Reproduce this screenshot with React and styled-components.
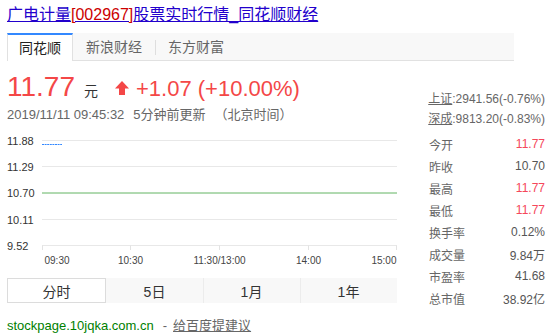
import React from 'react'
import styled, { createGlobalStyle } from 'styled-components'

const GlobalStyle = createGlobalStyle`
    body {
        margin: 0;
        background: #fff;
        font-family: "Liberation Sans", Arial, "Noto Sans CJK SC", sans-serif;
        color: #333;
    }
`

const sources = ['同花顺', '新浪财经', '东方财富']
const ranges = ['分时', '5日', '1月', '1年']

const stats = [
    { label: '今开', value: '11.77', up: true },
    { label: '昨收', value: '10.70' },
    { label: '最高', value: '11.77', up: true },
    { label: '最低', value: '11.77', up: true },
    { label: '换手率', value: '0.12%' },
    { label: '成交量', value: '9.84万' },
    { label: '市盈率', value: '41.68' },
    { label: '总市值', value: '38.92亿' },
]

// grid rows of the intraday chart (svg coords)
const priceLines = [
    { label: '11.88', y: 10.5 },
    { label: '11.29', y: 36.5 },
    { label: '10.70', y: 63 },
    { label: '10.11', y: 89.5 },
    { label: '9.52', y: 115.5 },
]

const timeTicks = [
    { label: '09:30', x: 35.5, anchor: 'start', dx: 2 },
    { label: '10:30', x: 123.5, anchor: 'middle', dx: 0 },
    { label: '11:30/13:00', x: 212.5, anchor: 'middle', dx: 0 },
    { label: '14:00', x: 301.5, anchor: 'middle', dx: 0 },
    { label: '15:00', x: 389.5, anchor: 'end', dx: 0 },
]

const UpArrow = () => (
    <svg width="16" height="16" viewBox="0 0 16 16">
        <polygon points="1,8.5 8,1 15,8.5" fill="#f44747" />
        <rect x="5" y="8" width="6" height="7" fill="#f44747" />
    </svg>
)

const IntradayChart = () => (
    <ChartSvg width="390" height="140" viewBox="0 0 390 140">
        {priceLines.map((p, i) => (
            <g key={p.label}>
                <line
                    x1="35"
                    x2="390"
                    y1={p.y}
                    y2={p.y}
                    stroke={i === 2 ? '#63b463' : '#e8e8e8'}
                    strokeWidth="1"
                />
                <text x="0" y={p.y + 4} fontSize="11" fill="#333">
                    {p.label}
                </text>
            </g>
        ))}
        <line x1="35" x2="55" y1="14.5" y2="14.5" stroke="#3388ff" strokeWidth="1" strokeDasharray="2 0.6" />
        {timeTicks.map((t) => (
            <g key={t.label}>
                <line x1={t.x} x2={t.x} y1="115.5" y2="120" stroke="#e3e3e3" />
                <text x={t.x + t.dx} y="134" fontSize="10" fill="#444" textAnchor={t.anchor}>
                    {t.label}
                </text>
            </g>
        ))}
    </ChartSvg>
)

const App = () => {
    return (
        <>
            <GlobalStyle />
            <Page>
                <Title href="#">
                    广电计量<Code>[002967]</Code>股票实时行情_同花顺财经
                </Title>

                <SourceTabs>
                    {sources.map((s, i) => (
                        <SourceTab key={s} active={i === 0} divided={i > 1}>
                            {s}
                        </SourceTab>
                    ))}
                </SourceTabs>

                <Main>
                    <LeftCol>
                        <PriceRow>
                            <Price>11.77</Price>
                            <Unit>元</Unit>
                            <ArrowBox>
                                <UpArrow />
                            </ArrowBox>
                            <Change>+1.07 (+10.00%)</Change>
                        </PriceRow>
                        <TimeRow>
                            2019/11/11 09:45:32<Gap />5分钟前更新<Gap />（北京时间）
                        </TimeRow>
                        <IntradayChart />
                        <RangeTabs>
                            {ranges.map((r, i) => (
                                <RangeTab key={r} active={i === 0} divided={i > 1}>
                                    {r}
                                </RangeTab>
                            ))}
                        </RangeTabs>
                    </LeftCol>

                    <RightCol>
                        <IndexLine>
                            <IndexLink href="#">上证</IndexLink>:2941.56(-0.76%)
                        </IndexLine>
                        <IndexLine>
                            <IndexLink href="#">深成</IndexLink>:9813.20(-0.83%)
                        </IndexLine>
                        <StatList>
                            {stats.map((s) => (
                                <StatRow key={s.label}>
                                    <StatLabel>{s.label}</StatLabel>
                                    <StatValue up={s.up}>{s.value}</StatValue>
                                </StatRow>
                            ))}
                        </StatList>
                    </RightCol>
                </Main>

                <Footer>
                    <SiteUrl>stockpage.10jqka.com.cn</SiteUrl>
                    <Dash>-</Dash>
                    <Feedback href="#">给百度提建议</Feedback>
                </Footer>
            </Page>
        </>
    )
}

// PAGE
const Page = styled.div`
    width: 540px;
    padding: 4px 7px 0;
`

const Title = styled.a`
    display: inline-block;
    font-size: 16px;
    line-height: 22px;
    color: #2200cc;
    text-decoration: underline;
`

const Code = styled.span`
    color: #cc0000;
`

// SOURCE TABS
const SourceTabs = styled.div`
    margin-top: 7px;
    width: 507px;
    height: 27px;
    display: flex;
    background: #f8f8f8;
    border-bottom: 1px solid #e1e1e1;
`

const SourceTab = styled.div`
    position: relative;
    height: ${(p) => (p.active ? '25px' : '27px')};
    line-height: ${(p) => (p.active ? '25px' : '27px')};
    padding: 0 ${(p) => (p.active ? '11px' : '13px')};
    font-size: 14px;
    font-family: "Noto Sans CJK SC", sans-serif;
    color: ${(p) => (p.active ? '#222' : '#666')};
    background: ${(p) => (p.active ? '#fff' : 'transparent')};
    border-top: ${(p) => (p.active ? '2px solid #3388ff' : 'none')};
    border-left: ${(p) => (p.active ? '1px solid #e1e1e1' : 'none')};
    border-right: ${(p) => (p.active ? '1px solid #e1e1e1' : 'none')};
    margin-bottom: ${(p) => (p.active ? '-1px' : '0')};
    padding-bottom: ${(p) => (p.active ? '1px' : '0')};

    &::before {
        content: '';
        display: ${(p) => (p.divided ? 'block' : 'none')};
        position: absolute;
        left: 0;
        top: 7px;
        width: 1px;
        height: 15px;
        background: #dedede;
    }
`

// MAIN
const Main = styled.div`
    display: flex;
    gap: 31px;
`

const LeftCol = styled.div`
    width: 390px;
    display: flex;
    flex-direction: column;
`

const PriceRow = styled.div`
    margin-top: 10px;
    height: 32px;
    display: flex;
    align-items: baseline;
    color: #f44747;
`

const Price = styled.span`
    font-size: 28px;
    line-height: 32px;
`

const Unit = styled.span`
    margin-left: 9px;
    font-size: 14px;
    color: #333;
    font-family: "Noto Sans CJK SC", sans-serif;
`

const ArrowBox = styled.span`
    margin-left: 16px;
    align-self: center;
    display: flex;
    margin-top: 2px;
`

const Change = styled.span`
    margin-left: 6px;
    font-size: 22px;
`

const TimeRow = styled.div`
    margin-top: 3px;
    font-size: 13px;
    line-height: 18px;
    color: #666;
    white-space: nowrap;
`

const Gap = styled.span`
    display: inline-block;
    width: 9px;
`

const ChartSvg = styled.svg`
    display: block;
    margin-top: 6px;
    font-family: "Liberation Sans", Arial, sans-serif;
`

const RangeTabs = styled.div`
    margin-top: 8px;
    height: 25px;
    display: flex;
    background: #f8f8f8;
`

const RangeTab = styled.div`
    position: relative;
    flex: 1;
    display: flex;
    align-items: center;
    justify-content: center;
    font-size: 14px;
    font-family: "Liberation Sans", Arial, "Noto Sans CJK SC", sans-serif;
    color: #333;
    background: ${(p) => (p.active ? '#fff' : 'transparent')};
    border: ${(p) => (p.active ? '1px solid #dcdcdc' : 'none')};

    &::before {
        content: '';
        display: ${(p) => (p.divided ? 'block' : 'none')};
        position: absolute;
        left: 0;
        top: 0;
        bottom: 0;
        width: 1px;
        background: #ececec;
    }
`

// RIGHT PANEL
const RightCol = styled.div`
    width: 117px;
    padding-top: 28px;
    font-size: 12px;
    color: #666;
`

const IndexLine = styled.div`
    line-height: 18.5px;
    white-space: nowrap;
    text-align: right;
`

const IndexLink = styled.a`
    color: #666;
    text-decoration: underline;
    font-family: "Noto Sans CJK SC", sans-serif;
`

const StatList = styled.div`
    margin-top: 5px;
`

const StatRow = styled.div`
    height: 22px;
    display: flex;
    align-items: center;
    justify-content: space-between;
    padding-left: 1px;
`

const StatLabel = styled.span`
    font-family: "Noto Sans CJK SC", sans-serif;
    color: #666;
`

const StatValue = styled.span`
    color: ${(p) => (p.up ? '#f5475b' : '#555')};
`

// FOOTER
const Footer = styled.div`
    margin-top: 8px;
    font-size: 13px;
    line-height: 18px;
    display: flex;
    white-space: nowrap;
`

const SiteUrl = styled.span`
    color: #008000;
`

const Dash = styled.span`
    color: #666;
    margin: 0 6px 0 9px;
`

const Feedback = styled.a`
    color: #666;
    text-decoration: underline;
`

export default App
